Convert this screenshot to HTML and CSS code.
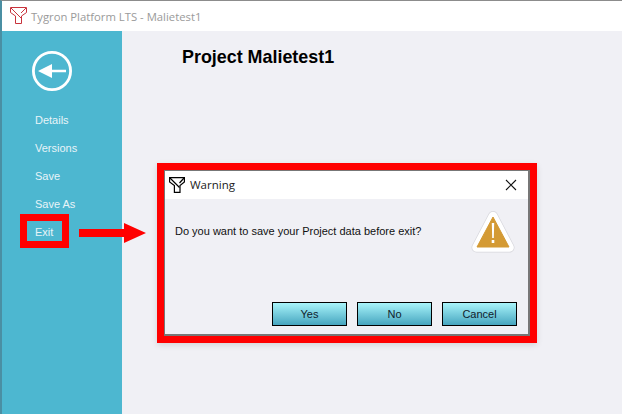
FILE: index.html
```html
<!DOCTYPE html>
<html lang="en">
<head>
    <meta charset="UTF-8">
    <title>Tygron Platform LTS - Malietest1</title>
    <link rel="stylesheet" href="styles.css">
</head>
<body>
    <div class="window">
        <div class="titlebar">
            <svg class="app-icon" width="17" height="18" viewBox="0 0 17 18">
                <path d="M0.5 0.5H16.5V5.5L11.5 9V16.5H5.5V9L0.5 5.5Z" fill="#fff" stroke="#c8333c" stroke-width="1"/>
                <path d="M1 1L11 11M16 1L11 6" fill="none" stroke="#c8333c" stroke-width="1"/>
            </svg>
            <span class="app-title">Tygron Platform LTS - Malietest1</span>
        </div>
        <div class="main">
            <div class="sidebar">
                <svg class="back" width="40" height="40" viewBox="0 0 40 40">
                    <circle cx="20" cy="20" r="18.6" fill="none" stroke="#fff" stroke-width="2.8"/>
                    <path d="M6 20L20 13V18.8H34V21.2H20V27Z" fill="#fff"/>
                </svg>
                <nav class="menu">
                    <div class="menu-item">Details</div>
                    <div class="menu-item">Versions</div>
                    <div class="menu-item">Save</div>
                    <div class="menu-item">Save As</div>
                    <div class="menu-item">Exit</div>
                </nav>
            </div>
            <div class="content">
                <h1>Project Malietest1</h1>
            </div>
        </div>
    </div>

    <div class="exit-mark"></div>
    <svg class="arrow" width="68" height="28" viewBox="0 0 68 28">
        <path d="M0 10H45V4L67 14L45 24V18H0Z" fill="#f00"/>
    </svg>

    <div class="highlight">
        <div class="dialog">
            <div class="dialog-head">
                <svg width="16" height="16" viewBox="0 0 16 16">
                    <path d="M0.6 0.6H15.4V5L11 8.5V15.4H5.4V8.5L0.6 5Z" fill="#fff" stroke="#000" stroke-width="1.2"/>
                    <path d="M1 1L10.5 10.5M15 1L10.5 6" fill="none" stroke="#000" stroke-width="1.2"/>
                </svg>
                <span class="dialog-title">Warning</span>
                <svg class="close" width="12" height="12" viewBox="0 0 12 12">
                    <path d="M1 1L11 11M11 1L1 11" stroke="#111" stroke-width="1.1" fill="none"/>
                </svg>
            </div>
            <div class="dialog-body">
                <p>Do you want to save your Project data before exit?</p>
                <svg class="warn" width="44" height="44" viewBox="0 0 44 44">
                    <path d="M22 6L38.5 37.5H5.5Z" fill="#fff" stroke="#d6d6dc" stroke-width="10" stroke-linejoin="round"/>
                    <path d="M22 6L38.5 37.5H5.5Z" fill="#fff" stroke="#fff" stroke-width="8.6" stroke-linejoin="round"/>
                    <path d="M22 7L38 37H6Z" fill="#d49a34" stroke="#d49a34" stroke-width="1" stroke-linejoin="round"/>
                    <path d="M20.8 13H23.2L22.8 28H21.2Z M20.7 30H23.3V33H20.7Z" fill="#fff"/>
                </svg>
            </div>
            <div class="dialog-buttons">
                <button>Yes</button>
                <button>No</button>
                <button>Cancel</button>
            </div>
        </div>
    </div>
</body>
</html>
```

FILE: styles.css
```css
body {
    margin: 0;
    width: 622px;
    height: 414px;
    overflow: hidden;
    position: relative;
    font-family: "Liberation Sans", Arial, sans-serif;
    background-color: #f0f0f5;
}

.window {
    height: 414px;
    border-top: 1px solid #8c8c8c;
    border-left: 2px solid #4a8fa3;
    box-sizing: border-box;
    display: flex;
    flex-direction: column;
}

.titlebar {
    height: 30px;
    background: #fff;
    display: flex;
    align-items: center;
    padding-left: 8px;
    flex-shrink: 0;
}

.app-icon {
    margin-right: 4px;
}

.app-title {
    font-family: "Open Sans", sans-serif;
    font-size: 11.3px;
    color: #9a9a9a;
}

.main {
    flex: 1;
    display: flex;
}

.sidebar {
    width: 120px;
    background-color: #4db7d0;
    padding-top: 20px;
    box-sizing: border-box;
}

.back {
    display: block;
    margin-left: 30px;
}

.menu {
    margin-top: 15px;
    padding-left: 33px;
}

.menu-item {
    height: 28px;
    line-height: 28px;
    font-size: 11px;
    color: #e8f4f8;
}

.content {
    flex: 1;
    padding: 15px 0 0 60px;
}

h1 {
    margin: 0;
    font-size: 17.9px;
    line-height: 22px;
    color: #000;
}

.exit-mark {
    position: absolute;
    left: 20px;
    top: 214px;
    width: 49px;
    height: 34px;
    border: 7px solid #f00;
    box-sizing: border-box;
}

.arrow {
    position: absolute;
    left: 79px;
    top: 219px;
}

.highlight {
    position: absolute;
    left: 157px;
    top: 163px;
    width: 380px;
    height: 180px;
    border: 7px solid #f00;
    box-sizing: border-box;
    box-shadow: 0 2px 6px rgba(0, 0, 0, 0.12);
}

.dialog {
    height: 100%;
    border: 1px solid #777;
    border-right-width: 2px;
    border-bottom-width: 2px;
    box-sizing: border-box;
    display: flex;
    flex-direction: column;
    background: #f0f0f5;
}

.dialog-head {
    height: 28px;
    background: #fff;
    display: flex;
    align-items: center;
    padding: 0 11px 0 4px;
    flex-shrink: 0;
}

.dialog-title {
    margin-left: 5px;
    margin-bottom: 1px;
    font-family: "Open Sans", sans-serif;
    font-size: 11.5px;
    color: #222;
    flex: 1;
}

.dialog-body {
    flex: 1;
    position: relative;
    padding: 26px 0 0 10px;
}

.dialog-body p {
    margin: 0;
    font-size: 11px;
    line-height: 13px;
    color: #111;
}

.warn {
    position: absolute;
    right: 13px;
    top: 11px;
}

.dialog-buttons {
    display: flex;
    justify-content: flex-end;
    gap: 10px;
    padding: 0 11px 8px 0;
}

button {
    width: 75px;
    height: 24px;
    padding: 0;
    border: 1px solid #000;
    background: linear-gradient(#a8f4fa, #46a5bf);
    font-family: "Liberation Sans", Arial, sans-serif;
    font-size: 11px;
    color: #10222c;
}
```
